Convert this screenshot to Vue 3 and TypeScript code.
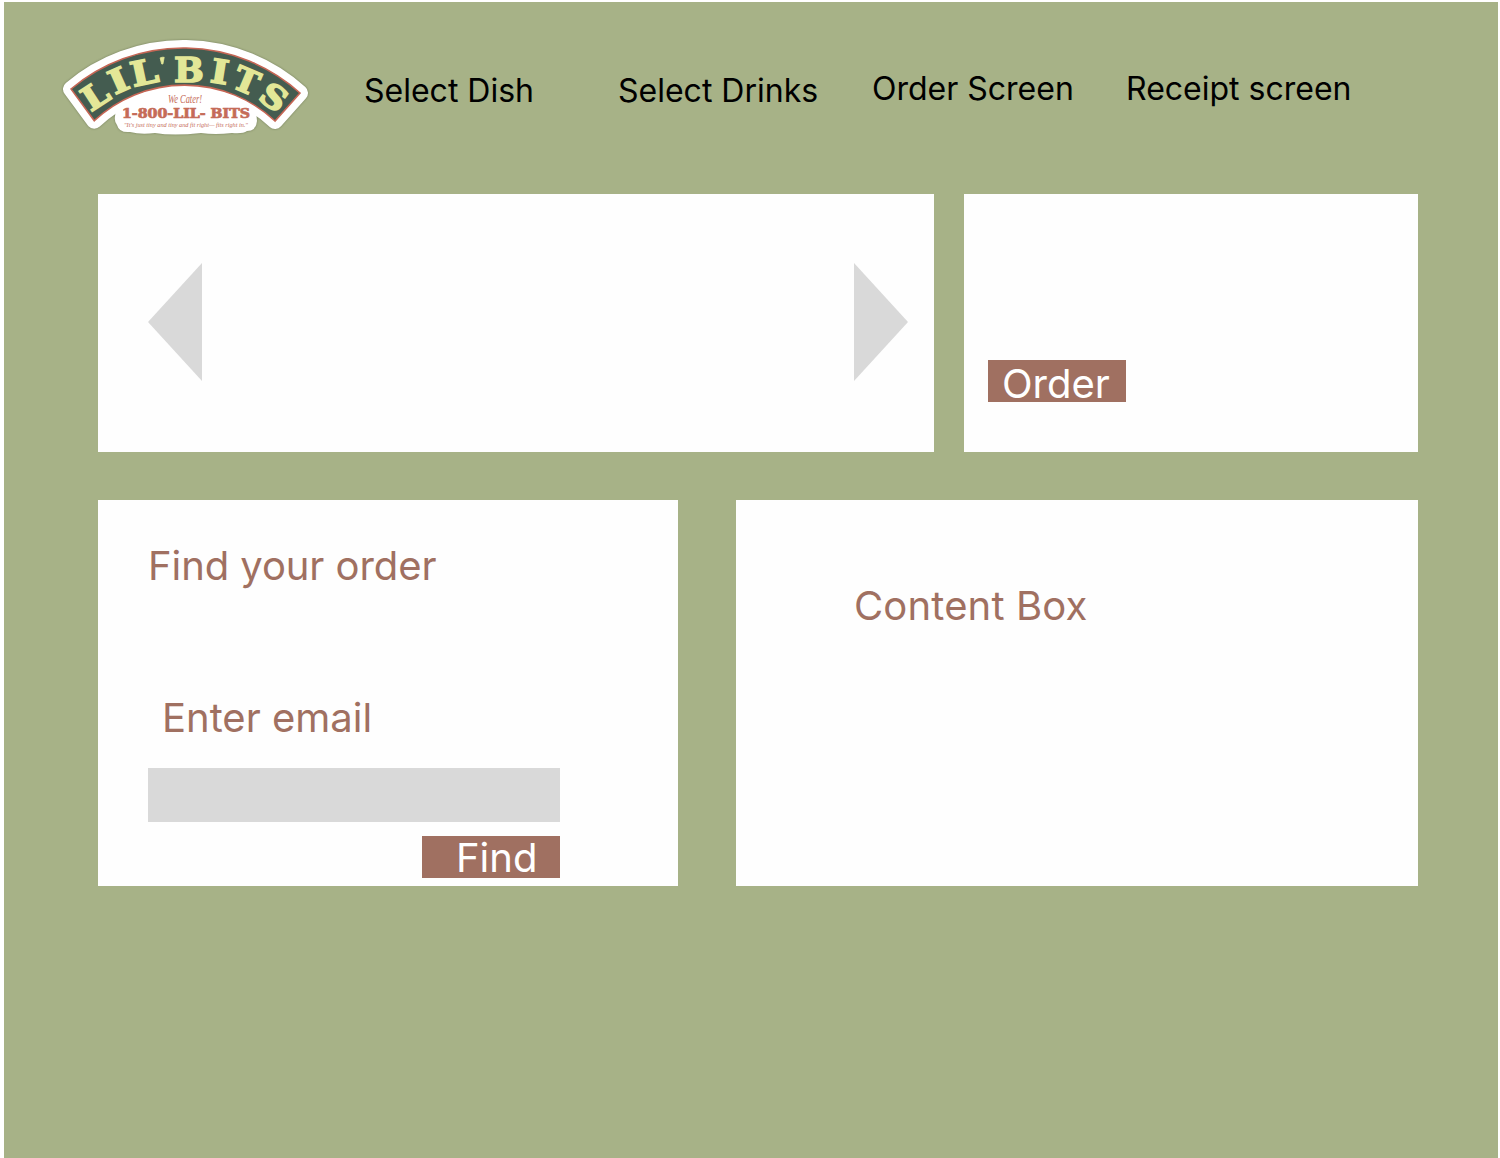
<script setup lang="ts">
interface Glyph {
  char: string
  x: number
  y: number
  angle: number
  size: number
  stretch: number
}

const navItems: { label: string; raised: boolean }[] = [
  { label: 'Select Dish', raised: false },
  { label: 'Select Drinks', raised: false },
  { label: 'Order Screen', raised: true },
  { label: 'Receipt screen', raised: true },
]

// Letters of the logo, each centred on its point of the arched band
const glyphs: Glyph[] = [
  { char: 'L', x: 40, y: 65, angle: -33, size: 33, stretch: 1.12 },
  { char: 'I', x: 63.3, y: 50.2, angle: -24, size: 33, stretch: 1.2 },
  { char: 'L', x: 89, y: 42, angle: -12, size: 34, stretch: 1.15 },
  { char: 'B', x: 134, y: 39.5, angle: 0, size: 34, stretch: 1.04 },
  { char: 'I', x: 165, y: 41.3, angle: 9, size: 33, stretch: 1.15 },
  { char: 'T', x: 191.5, y: 50.5, angle: 23, size: 33, stretch: 1.03 },
  { char: 'S', x: 219, y: 67, angle: 36, size: 32, stretch: 1.12 },
]
</script>

<template>
  <div class="page">
    <header class="header">
      <svg class="logo" width="260" height="115" viewBox="0 0 260 115" role="img" aria-label="Lil' Bits">
        <g class="badge">
          <path
            d="M16 59 A174 174 0 0 1 245 63 L220 91 A132 132 0 0 0 39.3 90.7 Z"
            fill="#fff" stroke="#fff" stroke-width="16" stroke-linejoin="round"
          />
          <path d="M61 80 Q130 34 201 80 L202 91 Q201 101 192 101 Q188 104 177 103 Q160 105 146 103 Q118 106 100 103 Q86 105 75 102 Q64 103 62 95 Q59 91 60 86 Z" fill="#fff" />
        </g>
        <path
          d="M16 59 A174 174 0 0 1 245 63 L220 91 A132 132 0 0 0 39.3 90.7 Z"
          fill="#445c50" stroke="#c66655" stroke-width="1.6"
        />
        <text
          v-for="(glyph, i) in glyphs" :key="i" class="arch-letter"
          :font-size="glyph.size"
          :transform="`translate(${glyph.x} ${glyph.y}) rotate(${glyph.angle}) scale(${glyph.stretch} 1)`"
          :y="glyph.size * 0.365"
        >{{ glyph.char }}</text>
        <path d="M105.1 27.9 Q107 26.9 109.2 27.3 L107.9 34 L106.7 34 Z" fill="#e3e797" stroke="#e3e797" stroke-width=".8" />
        <text class="script" x="113" y="72.5" font-size="11.5" textLength="34" lengthAdjust="spacingAndGlyphs">We Cater!</text>
        <text class="phone" x="67" y="88" font-size="13" textLength="128" lengthAdjust="spacingAndGlyphs">1-800-LIL- BITS</text>
        <text class="script" x="69" y="96.5" font-size="7" textLength="124" lengthAdjust="spacingAndGlyphs">"It's just tiny and tiny and fit right— fits right in."</text>
      </svg>
      <nav class="nav">
        <a v-for="item in navItems" :key="item.label" :class="{ raised: item.raised }">{{ item.label }}</a>
      </nav>
    </header>

    <main class="content">
      <section class="row top-row">
        <div class="card carousel">
          <svg width="54" height="118" viewBox="0 0 54 118"><path d="M0 59 L54 0 V118 Z" fill="#d9d9d9" /></svg>
          <svg width="54" height="118" viewBox="0 0 54 118"><path d="M54 59 L0 0 V118 Z" fill="#d9d9d9" /></svg>
        </div>
        <div class="card order-card">
          <button class="button order-button">Order</button>
        </div>
      </section>
      <section class="row bottom-row">
        <form class="card find-card" @submit.prevent>
          <h2 class="find-title">Find your order</h2>
          <label for="email">Enter email</label>
          <input id="email" type="email" />
          <button class="button find-button">Find</button>
        </form>
        <div class="card content-card">
          <h2 class="content-title">Content Box</h2>
        </div>
      </section>
    </main>
  </div>
</template>

<style>
body {
  margin: 0;
  background: #fff;
}
</style>

<style scoped>
.page {
  box-sizing: border-box;
  width: 1500px;
  height: 1158px;
  border: solid #fff;
  border-width: 2px 2px 0 4px;
  background: #a7b287;
  font-family: Inter, "Liberation Sans", sans-serif;
}

.header {
  display: flex;
  height: 192px;
  box-sizing: border-box;
  padding: 28px 0 0 51px;
}

.logo {
  flex: none;
}

.badge {
  filter: drop-shadow(0 0.5px 1px rgba(50, 60, 30, 0.45));
}

.arch-letter {
  fill: #e3e797;
  stroke: #e3e797;
  stroke-width: 1.5px;
  font-family: "DejaVu Serif", serif;
  font-weight: bold;
  text-anchor: middle;
}

.phone {
  fill: #c56b58;
  stroke: #c56b58;
  stroke-width: 0.7px;
  font-family: "DejaVu Serif", serif;
  font-weight: bold;
}

.script {
  fill: #c56b58;
  font-family: "Liberation Serif", serif;
  font-style: italic;
}

.nav {
  display: grid;
  grid-template-columns: repeat(4, 254px);
  align-items: start;
  padding: 41px 0 0 49px;
  color: #000;
  font-size: 32px;
  line-height: 39px;
  white-space: nowrap;
}

.nav .raised {
  margin-top: -2px;
}

.content {
  display: flex;
  flex-direction: column;
  gap: 48px;
  padding-left: 94px;
}

.row {
  display: flex;
}

.top-row {
  height: 258px;
  gap: 30px;
}

.bottom-row {
  height: 386px;
  gap: 58px;
}

.card {
  box-sizing: border-box;
  background: #fefefe;
}

.carousel {
  display: flex;
  justify-content: space-between;
  align-items: center;
  width: 836px;
  padding: 0 26px 2px 50px;
}

.order-card {
  width: 454px;
  padding: 166px 0 0 24px;
}

.button {
  display: block;
  box-sizing: border-box;
  width: 138px;
  height: 42px;
  border: 0;
  border-radius: 0;
  background: #a07061;
  color: #fff;
  font: 400 40px/48px Inter, "Liberation Sans", sans-serif;
  text-align: left;
  white-space: nowrap;
}

.order-button {
  padding: 0 0 0 14px;
}

.find-card {
  display: flex;
  flex-direction: column;
  width: 580px;
  padding: 42px 0 0 50px;
}

h2,
label {
  margin: 0;
  color: #a07061;
  font-size: 40px;
  font-weight: 400;
  line-height: 48px;
  white-space: nowrap;
}

.find-title {
  letter-spacing: -0.08px;
}

.content-title {
  letter-spacing: 0.15px;
}

label {
  margin: 104px 0 0 14px;
}

input {
  box-sizing: border-box;
  width: 412px;
  height: 54px;
  margin: 26px 0 14px;
  padding: 0 12px;
  border: 0;
  border-radius: 0;
  background: #d9d9d9;
  font-size: 32px;
}

.find-button {
  margin-left: 274px;
  padding: 0 0 0 34px;
  line-height: 44px;
}

.content-card {
  width: 682px;
  padding: 82px 0 0 118px;
}
</style>
